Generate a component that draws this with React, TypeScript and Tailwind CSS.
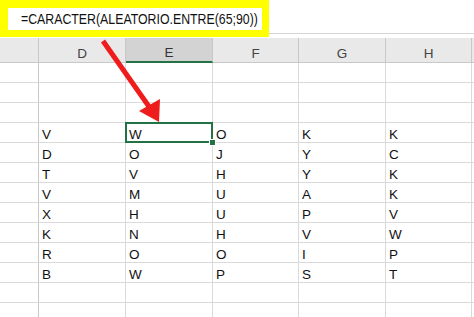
import React from "react";

const cols = ["D", "E", "F", "G", "H"];

const data: string[][] = [
  ["V", "W", "O", "K", "K"],
  ["D", "O", "J", "Y", "C"],
  ["T", "V", "H", "Y", "K"],
  ["V", "M", "U", "A", "K"],
  ["X", "H", "U", "P", "V"],
  ["K", "N", "H", "V", "W"],
  ["R", "O", "O", "I", "P"],
  ["B", "W", "P", "S", "T"],
];

// 3 blank rows, the 8 letter rows, then 2 blank rows
const body: string[][] = [
  ["", "", "", "", ""],
  ["", "", "", "", ""],
  ["", "", "", "", ""],
  ...data,
  ["", "", "", "", ""],
  ["", "", "", "", ""],
];

const cell =
  "h-[20px] border-r border-b border-[#dadada] flex items-end pl-[3px] text-[13.5px] leading-[15px] text-[#111]";

export default function App() {
  return (
    <div
      className="relative w-[474px] h-[317px] overflow-hidden bg-white"
      style={{ fontFamily: '"Liberation Sans", Arial, sans-serif' }}
    >
      {/* formula bar */}
      <div className="flex h-[38px]">
        <div className="w-[269px] h-[37px] bg-[#ffff00] pl-[8px] pt-[8px] pr-[7px] pb-[7px]">
          <div className="h-[22px] bg-white flex items-center pl-[13px] overflow-hidden">
            <span className="inline-block origin-left scale-x-[0.85] whitespace-nowrap text-[14.5px] leading-[16px] text-[#111]">
              =CARACTER(ALEATORIO.ENTRE(65;90))
            </span>
          </div>
        </div>
        <div className="flex-1 h-[34px] border-b border-[#d6d6d6]" />
      </div>

      {/* sheet */}
      <div className="grid grid-cols-[39px_87px_87px_86px_87px_86px_1fr]">
        <div className="h-[25px] bg-[#e9e9e9] border-r border-b border-[#c8c8c8]" />
        {cols.map((c) => (
          <div
            key={c}
            className={
              c === "E"
                ? "h-[25px] bg-[#d3d3d3] border-r border-[#c8c8c8] border-b-2 border-b-[#217346] flex items-end justify-center pb-[1px] text-[13.5px] leading-[15px] text-[#333]"
                : "h-[25px] bg-[#e9e9e9] border-r border-b border-[#c8c8c8] flex items-end justify-center pb-[1px] text-[13.5px] leading-[15px] text-[#444]"
            }
          >
            {c}
          </div>
        ))}
        <div className="h-[25px] bg-[#e9e9e9] border-b border-[#c8c8c8]" />

        {body.map((row, r) => (
          <React.Fragment key={r}>
            <div className="h-[20px] border-r border-b border-r-[#c8c8c8] border-b-[#dadada]" />
            {row.map((v, i) => (
              <div key={i} className={r === 3 && i === 1 ? cell + " relative" : cell}>
                {v}
                {r === 3 && i === 1 && (
                  <>
                    <div className="absolute -left-[1px] -top-[1px] -right-[1px] -bottom-[1px] border-2 border-[#217346]" />
                    <div className="absolute -right-[4px] -bottom-[4px] w-[7px] h-[7px] bg-[#217346] border border-white" />
                  </>
                )}
              </div>
            ))}
            <div className="h-[20px] border-b border-[#dadada]" />
          </React.Fragment>
        ))}
      </div>

      {/* red pointer arrow */}
      <svg
        className="absolute left-0 top-0 pointer-events-none"
        width="474"
        height="317"
        viewBox="0 0 474 317"
      >
        <line x1="103" y1="41" x2="150" y2="108" stroke="#ee1c1c" strokeWidth="5" />
        <polygon points="159,122 139,111 160,99" fill="#ee1c1c" />
      </svg>
    </div>
  );
}
